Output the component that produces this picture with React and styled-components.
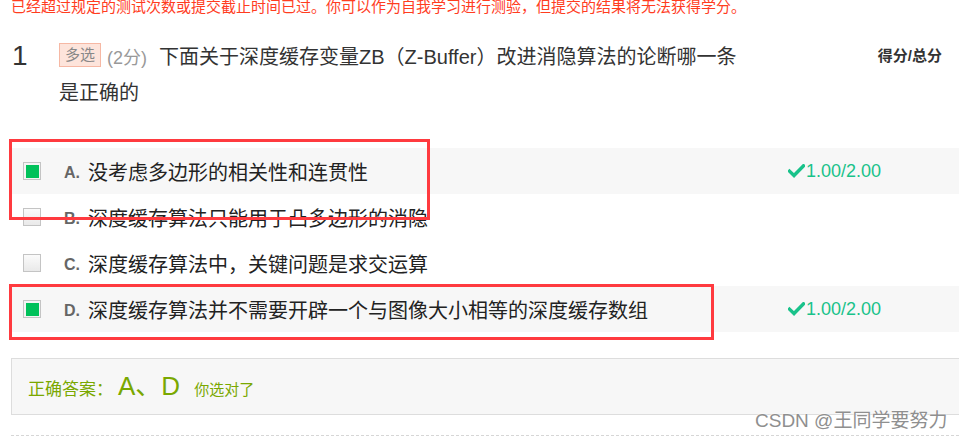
import React from "react";
import styled, { createGlobalStyle } from "styled-components";

const GlobalStyle = createGlobalStyle`
  html, body {
    margin: 0;
    padding: 0;
    background: #fff;
    font-family: "Liberation Sans", "Noto Sans CJK SC", sans-serif;
    overflow: hidden;
  }
`;

/* =========================
   styled-components
   ========================= */
const Page = styled.div`
  position: relative;
  width: 959px;
  height: 438px;
  padding-left: 10px;
  box-sizing: border-box;
  overflow: hidden;
`;

const Warning = styled.div`
  margin: -1px 0 0 1px;
  font-size: 15px;
  line-height: 15px;
  color: #ff3d1f;
  white-space: nowrap;
`;

const Header = styled.div`
  display: flex;
  align-items: flex-start;
  margin-top: 26px;
`;

const Number = styled.div`
  width: 47px;
  margin: -2px 0 0 2px;
  font-size: 28px;
  line-height: 35px;
  color: #333;
`;

const Title = styled.div`
  width: 695px;
  font-size: 20px;
  line-height: 35px;
  color: #333;
`;

const TypeTag = styled.span`
  display: inline-block;
  vertical-align: top;
  margin-top: 3px;
  height: 22px;
  padding: 0 5px;
  line-height: 22px;
  font-size: 15px;
  color: #888;
  background: #fde4db;
  border: 1px solid #f6b8a4;
`;

const Points = styled.span`
  margin: 0 12px 0 6px;
  font-size: 18px;
  color: #999;
`;

const ScoreHead = styled.div`
  margin-left: auto;
  margin-right: 17px;
  margin-top: 4px;
  font-size: 15px;
  font-weight: 700;
  color: #333;
`;

const Options = styled.div`
  position: relative;
  margin-top: 37px;
`;

const Row = styled.div`
  display: flex;
  align-items: center;
  height: 46px;
  padding-left: 13px;
  margin-right: -10px;
  background: ${(p) => (p.$shaded ? "#f7f7f7" : "transparent")};
`;

const Check = styled.span`
  width: 16px;
  height: 16px;
  border: 1px solid #c4c4c4;
  background: ${(p) =>
    p.$on ? "#f4f4f4" : "linear-gradient(180deg, #fbfbfb 0%, #e9e9e9 100%)"};
  display: grid;
  place-items: center;
  flex: none;

  &::after {
    content: "";
    width: 13px;
    height: 13px;
    background: ${(p) => (p.$on ? "#00c15a" : "transparent")};
  }
`;

const Letter = styled.span`
  width: 24px;
  margin: 4px 0 0 23px;
  font-size: 16px;
  font-weight: 700;
  color: #666;
  flex: none;
`;

const OptionText = styled.span`
  flex: 1;
  font-size: 20px;
  color: #222;
  white-space: nowrap;
`;

const Score = styled.span`
  width: 181px;
  display: flex;
  align-items: center;
  gap: 1px;
  font-size: 18px;
  color: #19c28a;
`;

const Mark = styled.div`
  position: absolute;
  left: -1px;
  top: ${(p) => p.$top}px;
  width: ${(p) => p.$w}px;
  height: ${(p) => p.$h}px;
  border: 3px solid #ff3a3f;
  box-sizing: border-box;
  pointer-events: none;
`;

const AnswerBox = styled.div`
  display: flex;
  align-items: baseline;
  margin: 26px -20px 0 1px;
  height: 55px;
  padding-left: 16px;
  background: #f7f7f7;
  border: 1px solid #ddd;
  color: #7aa800;
  line-height: 55px;
`;

const AnswerLabel = styled.span`
  font-size: 17px;
`;

const AnswerValue = styled.span`
  margin: 0 14px 0 5px;
  font-size: 26px;
`;

const AnswerNote = styled.span`
  font-size: 15px;
`;

const Dashed = styled.div`
  margin: 20px 0 0 1px;
  border-top: 1px dashed #d6d6d6;
`;

const Watermark = styled.div`
  position: absolute;
  left: 755px;
  top: 405px;
  font-size: 19px;
  color: #8f8f8f;
  text-shadow: 0 0 2px #fff, 0 0 2px #fff;
  white-space: nowrap;
`;

/* =========================
   data
   ========================= */
const options = [
  { key: "A", text: "没考虑多边形的相关性和连贯性", on: true, score: "1.00/2.00" },
  { key: "B", text: "深度缓存算法只能用于凸多边形的消隐" },
  { key: "C", text: "深度缓存算法中，关键问题是求交运算" },
  { key: "D", text: "深度缓存算法并不需要开辟一个与图像大小相等的深度缓存数组", on: true, score: "1.00/2.00" },
];

const CheckIcon = () => (
  <svg width="17" height="14" viewBox="0 0 17 14">
    <path d="M1.5 7.2 L6 11.5 L15.5 1.8" fill="none" stroke="#19c28a" strokeWidth="3.4" strokeLinecap="square" />
  </svg>
);

/* =========================
   component
   ========================= */
export default function App() {
  return (
    <Page>
      <GlobalStyle />
      <Warning>
        已经超过规定的测试次数或提交截止时间已过。你可以作为自我学习进行测验，但提交的结果将无法获得学分。
      </Warning>

      <Header>
        <Number>1</Number>
        <Title>
          <TypeTag>多选</TypeTag>
          <Points>(2分)</Points>
          下面关于深度缓存变量ZB（Z-Buffer）改进消隐算法的论断哪一条是正确的
        </Title>
        <ScoreHead>得分/总分</ScoreHead>
      </Header>

      <Options>
        {options.map((o) => (
          <Row key={o.key} $shaded={o.on}>
            <Check $on={o.on} />
            <Letter>{o.key}.</Letter>
            <OptionText>{o.text}</OptionText>
            {o.score && (
              <Score>
                <CheckIcon />
                {o.score}
              </Score>
            )}
          </Row>
        ))}
        {/* 标注框 */}
        <Mark $top={-9} $w={421} $h={81} />
        <Mark $top={136} $w={705} $h={56} />
      </Options>

      <AnswerBox>
        <AnswerLabel>正确答案：</AnswerLabel>
        <AnswerValue>A、D</AnswerValue>
        <AnswerNote>你选对了</AnswerNote>
      </AnswerBox>
      <Dashed />

      <Watermark>CSDN @王同学要努力</Watermark>
    </Page>
  );
}
